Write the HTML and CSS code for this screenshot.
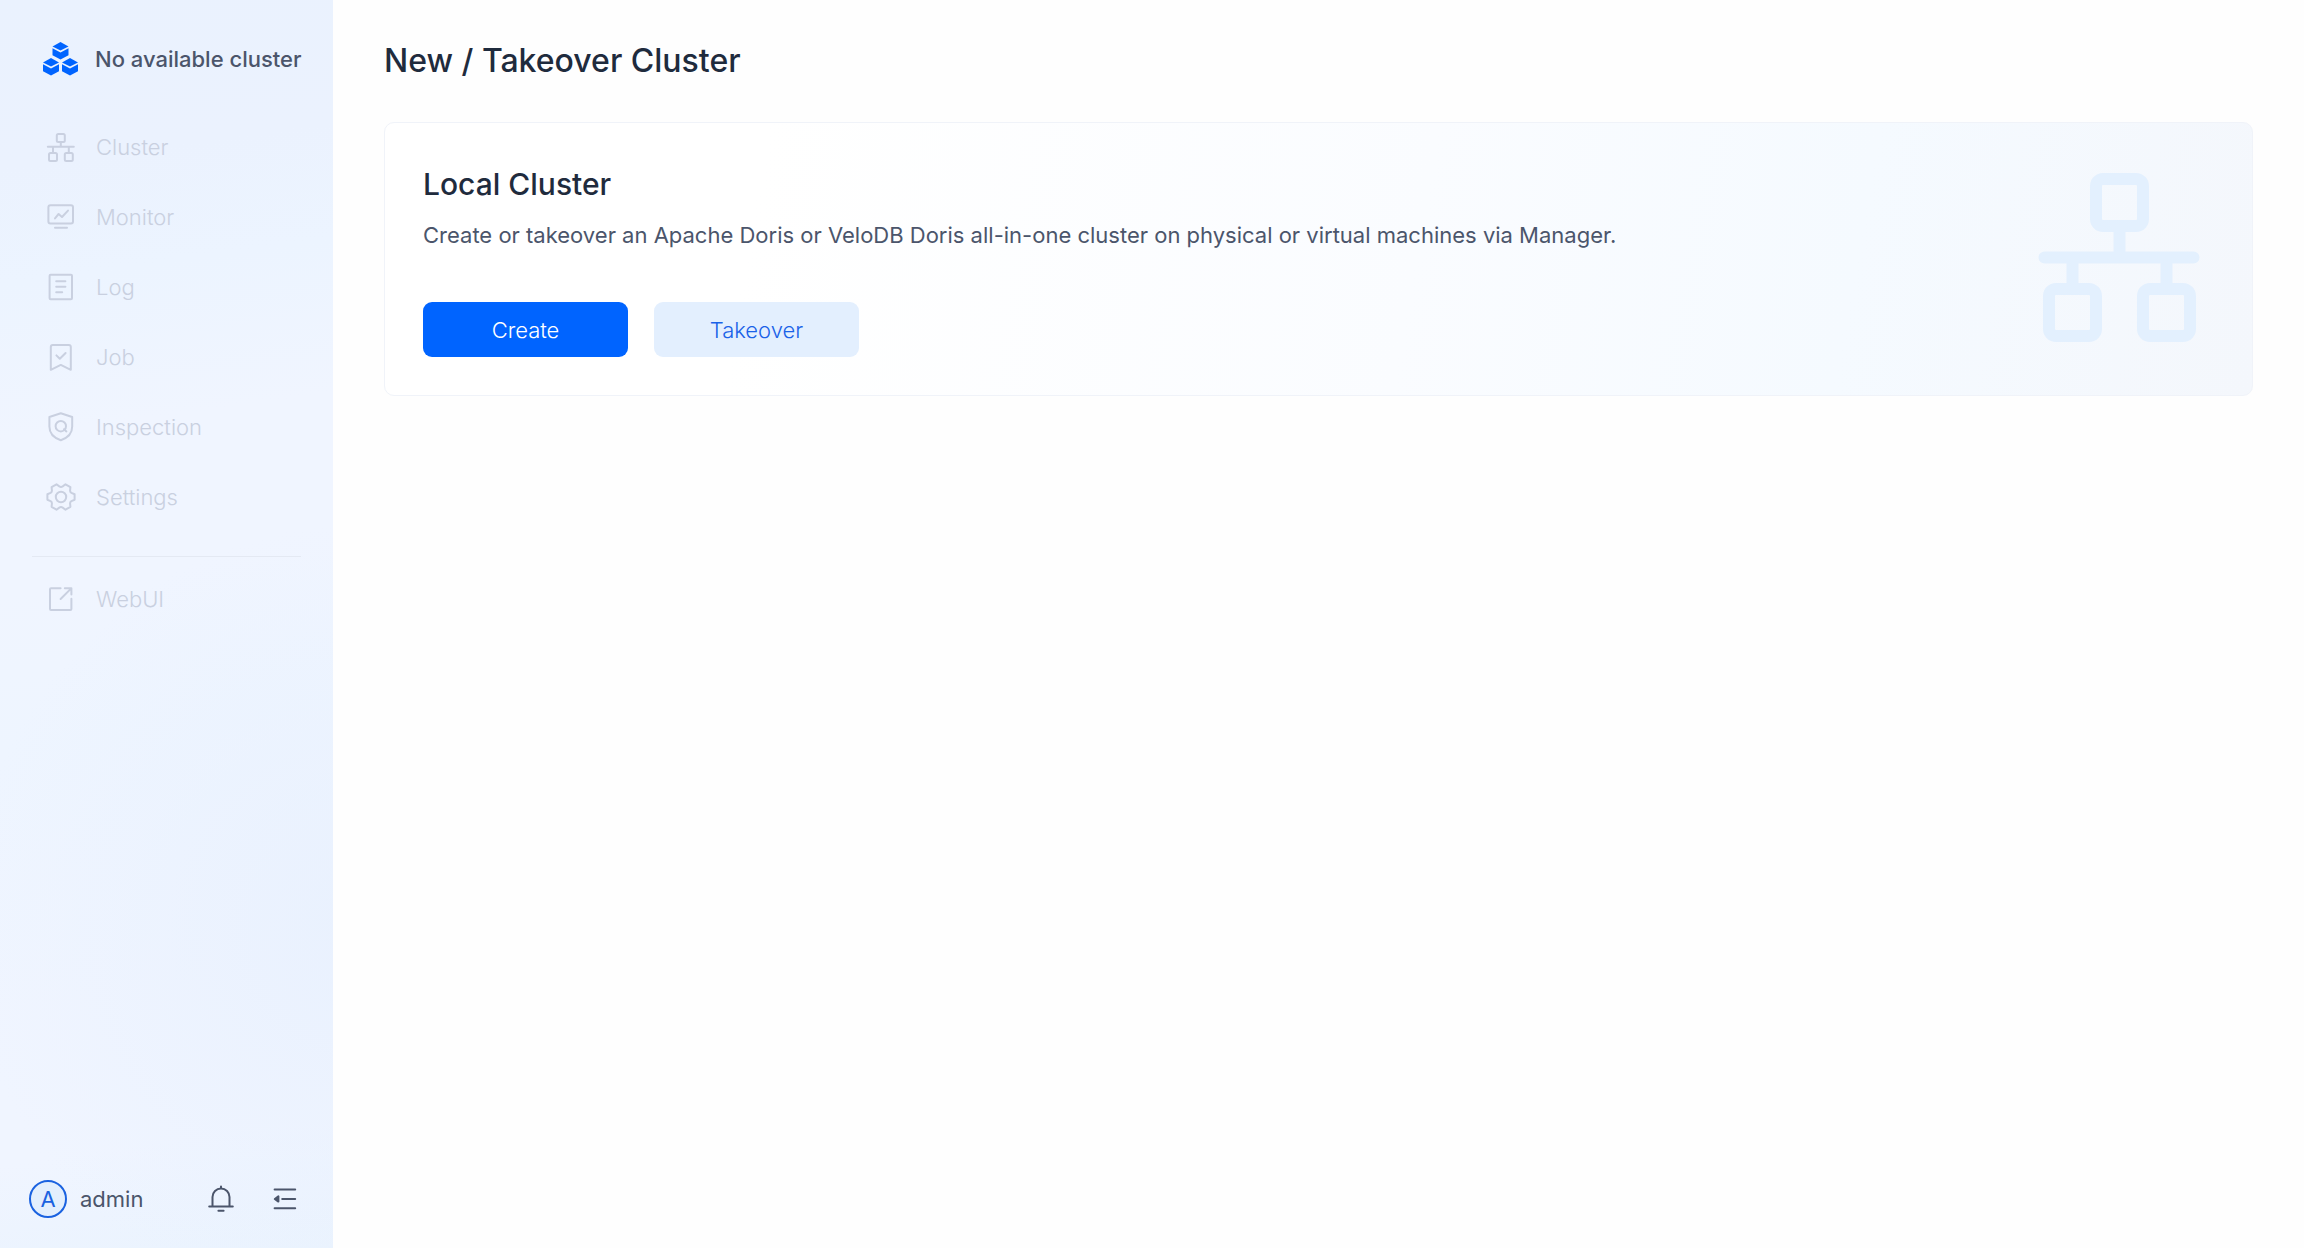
FILE: index.html
```html
<!DOCTYPE html>
<html lang="en">
<head>
  <meta charset="UTF-8">
  <meta name="viewport" content="width=device-width, initial-scale=1.0">
  <title>New / Takeover Cluster</title>
  <link rel="stylesheet" href="styles.css">
</head>
<body>
<aside class="sidebar">
  <div class="cluster-name">
    <svg class="logo" viewBox="0 0 36 36">
      <defs>
        <g id="cube">
          <path d="M8 0l8 4.4-8 4.2-8-4.2z"/>
          <path d="M0 6.2l8 4.2 8-4.2v7L8 17.6l-8-4.4z"/>
        </g>
      </defs>
      <use href="#cube" x="9.5" y="1"/>
      <use href="#cube" x="0" y="17"/>
      <use href="#cube" x="19" y="17"/>
    </svg>
    <span>No available cluster</span>
  </div>

  <nav class="menu">
    <a href="#">
      <svg class="icon" viewBox="0 0 30 30"><rect x="10.8" y="2" width="8" height="8" rx="1.5"/><path d="M14.8 10v4.7M1.8 14.7h26M7 14.7V21M22.8 14.7V21"/><rect x="3" y="21" width="8" height="8" rx="1.5"/><rect x="18.8" y="21" width="8" height="8" rx="1.5"/></svg>
      Cluster
    </a>
    <a href="#">
      <svg class="icon" viewBox="0 0 30 30"><rect x="2.4" y="3.2" width="24.6" height="18.4" rx="2"/><path d="M9 16.4l3.6-4.4 3.4 3 6-6.4M9 25.7h12"/></svg>
      Monitor
    </a>
    <a href="#">
      <svg class="icon" viewBox="0 0 30 30"><rect x="3.6" y="2.8" width="22.4" height="24.4" rx="1"/><path d="M10.2 9.3h9.2M10.2 14.7h9.2M10.2 20.2h6"/></svg>
      Log
    </a>
    <a href="#">
      <svg class="icon" viewBox="0 0 30 30"><path d="M4.8 27.8V5a2 2 0 0 1 2-2h16a2 2 0 0 1 2 2v22.8l-10-4.9z"/><path d="M10.4 13.4l3.4 3.4 5.8-5.8"/></svg>
      Job
    </a>
    <a href="#">
      <svg class="icon" viewBox="0 0 30 30"><path d="M14.8 1.2L26.2 5v9.6c0 6.4-4.4 11.4-11.4 13.6-7-2.2-11.4-7.2-11.4-13.6V5z"/><circle cx="14.8" cy="14.2" r="5.2"/><path d="M18 17.2l2.4 2.2"/></svg>
      Inspection
    </a>
    <a href="#">
      <svg class="icon" viewBox="0 0 30 30"><path d="M28.6 12.2v5.6l-3.2 1.3q-1.5 .9-1.3 2.6l.3 3.1-4.9 2.9-2.8-2.1q-1.7-1-3.4 0l-2.8 2.1-4.9-2.9 .3-3.1q.2-1.7-1.3-2.6l-3.2-1.3v-5.6l3.2-1.3q1.5-.9 1.3-2.6l-.3-3.1 4.9-2.9 2.8 2.1q1.7 1 3.4 0l2.8-2.1 4.9 2.9-.3 3.1q-.2 1.7 1.3 2.6z"/><circle cx="15" cy="15" r="5.2"/></svg>
      Settings
    </a>
    <hr>
    <a href="#">
      <svg class="icon" viewBox="0 0 30 30"><path d="M14.6 4.2H5a1 1 0 0 0-1 1V25a1 1 0 0 0 1 1h19.4a1 1 0 0 0 1-1V14.8"/><path d="M18.8 4.2h6.6v6.4M25 4.6L14.6 15"/></svg>
      WebUI
    </a>
  </nav>

  <div class="user-bar">
    <span class="avatar">A</span>
    <span class="user-name">admin</span>
    <button class="icon-btn" aria-label="Notifications">
      <svg class="icon" viewBox="0 0 30 30"><path d="M6.5 22.6V13a8.5 8.5 0 0 1 17 0v9.6M3.2 22.6h23.6M15 4.4V2.6M12.4 26.8h5.2"/></svg>
    </button>
    <button class="icon-btn" aria-label="Collapse menu">
      <svg class="icon" viewBox="0 0 30 30"><path d="M4.6 5.6h20.6M12.2 15h13M4.6 24.2h20.6"/><path class="fill" d="M4.8 15l3.6-2.6v5.2z"/></svg>
    </button>
  </div>
</aside>

<main class="content">
  <h1>New / Takeover Cluster</h1>

  <section class="card">
    <div>
      <h2>Local Cluster</h2>
      <p>Create or takeover an Apache Doris or VeloDB Doris all-in-one cluster on physical or virtual machines via Manager.</p>
      <div class="actions">
        <button class="btn btn-primary">Create</button>
        <button class="btn">Takeover</button>
      </div>
    </div>
    <svg class="card-art" viewBox="0 1 162 172">
      <rect x="58" y="7" width="47" height="47" rx="7"/>
      <path d="M81.5 54v31M6.5 85.5h149M34.5 86v31M128.5 86v31"/>
      <rect x="11" y="117" width="47" height="47" rx="7"/>
      <rect x="105" y="117" width="47" height="47" rx="7"/>
    </svg>
  </section>
</main>
</body>
</html>
```
FILE: styles.css
```css
* {
  box-sizing: border-box;
}
body {
  margin: 0;
  display: flex;
  min-height: 100vh;
  font-family: Inter, "Liberation Sans", sans-serif;
  font-size: 22px;
  line-height: 32px;
  color: #4b556b;
  background: #fefefe;
}
h1, h2, p {
  margin: 0;
}
button {
  font: inherit;
  border: none;
  cursor: pointer;
}
.icon {
  width: 30px;
  height: 30px;
  flex: none;
  fill: none;
  stroke: currentColor;
  stroke-width: 2;
  stroke-linecap: round;
  stroke-linejoin: round;
}
.icon .fill {
  fill: currentColor;
}

/* sidebar */
.sidebar {
  flex: none;
  width: 333px;
  display: flex;
  flex-direction: column;
  background:
    radial-gradient(circle at 110% 74%, #e9f1fe 0, rgba(233, 241, 254, 0) 400px),
    linear-gradient(172deg, #eaf2fe 0%, #ebf2fe 13%, #ecf4ff 22%, #f0f5ff 34%, #f0f5ff 46%, #eef5ff 58%, #f0f5ff 78%, #f0f5ff 90%, #eaf3fe 100%);
}
.cluster-name {
  display: flex;
  gap: 16px;
  height: 112px;
  padding: 41px 0 0 43px;
  font-weight: 500;
  line-height: 36px;
  white-space: nowrap;
}
.logo {
  width: 36px;
  height: 36px;
  fill: #0064ff;
}
.menu a {
  display: flex;
  align-items: center;
  gap: 20px;
  height: 70px;
  padding-left: 46px;
  font-weight: 300;
  color: #c9d0e0;
  text-decoration: none;
}
.menu hr {
  margin: 24px 32px 7px;
  border: none;
  border-top: 1px solid #e4e9f3;
}
.user-bar {
  display: flex;
  align-items: center;
  margin-top: auto;
  padding: 0 33px 30px 29px;
}
.avatar {
  width: 38px;
  height: 38px;
  border: 2px solid #1a62e0;
  border-radius: 50%;
  background: #e3effd;
  color: #1a62e0;
  line-height: 34px;
  text-align: center;
}
.user-name {
  margin-left: 13px;
  margin-right: auto;
}
.icon-btn {
  display: flex;
  margin-left: 34px;
  padding: 0;
  background: none;
  color: #4b556b;
}

/* content */
.content {
  flex: 1;
  padding: 41px 51px;
}
h1 {
  font-size: 32px;
  font-weight: 500;
  line-height: 40px;
  color: #1f2b3d;
}
.card {
  display: flex;
  justify-content: space-between;
  align-items: center;
  margin-top: 41px;
  padding: 37px 52px 38px 38px;
  border: 1px solid #f0f3f9;
  border-radius: 10px;
  background: linear-gradient(100deg, #fff 20%, #fafcff 55%, #f5faff 78%, #f4f7fc 100%);
}
h2 {
  font-size: 30px;
  font-weight: 500;
  line-height: 48px;
  color: #1f2b3d;
}
.card p {
  margin-top: 11px;
}
.actions {
  display: flex;
  gap: 26px;
  margin-top: 51px;
}
.btn {
  width: 205px;
  height: 55px;
  border-radius: 9px;
  font-weight: 300;
  color: #1a62e8;
  background: #e3effe;
}
.btn-primary {
  color: #fff;
  background: #0064ff;
}
.card-art {
  flex: none;
  width: 162px;
  height: 172px;
  fill: none;
  stroke: #e3f0fe;
  stroke-width: 12;
  stroke-linecap: round;
}
```
